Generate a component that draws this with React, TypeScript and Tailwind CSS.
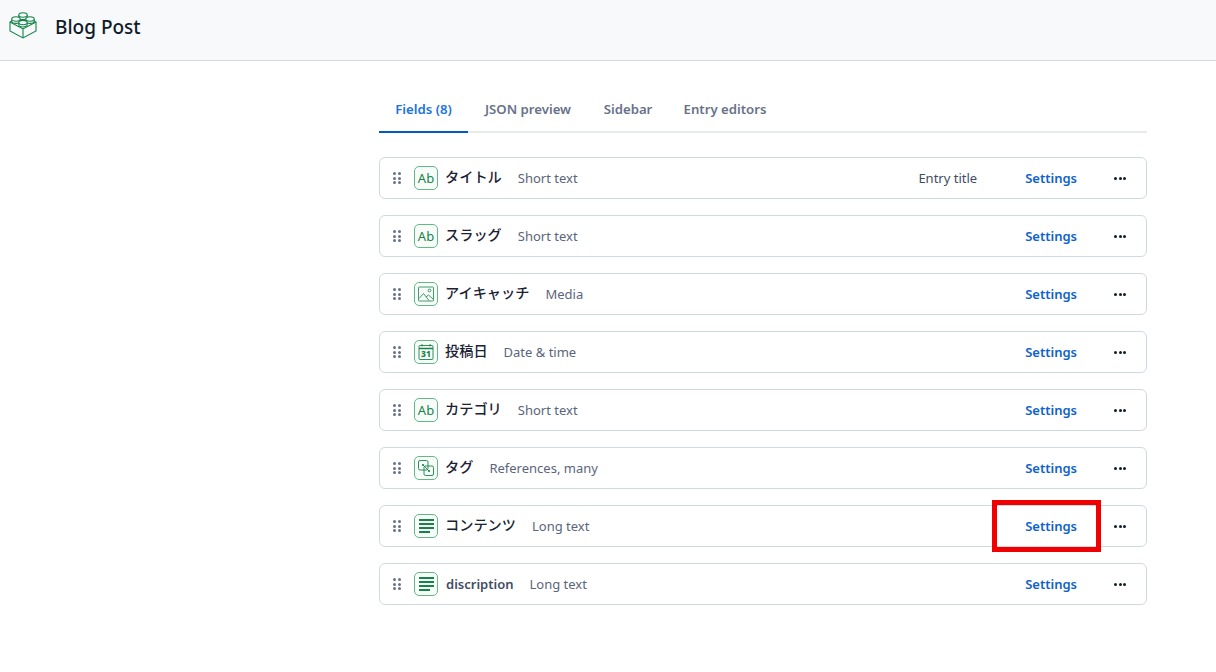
import React from "react";

const font = "font-['Noto_Sans','Noto_Sans_CJK_JP',sans-serif]";

function IconBox({ children }: { children: React.ReactNode }) {
  return (
    <span className="w-6 h-6 rounded-[5px] border border-[#64b888] flex items-center justify-center text-[#17834a] bg-[#f7fcf9] shrink-0">
      {children}
    </span>
  );
}

const AbIcon = () => <span className="text-[13px] leading-none tracking-[0.2px]">Ab</span>;

const MediaIcon = () => (
  <svg width="18" height="18" viewBox="0 0 18 18" fill="none" stroke="currentColor" strokeWidth="0.8">
    <rect x="1.5" y="2" width="15" height="14" rx="0.8" />
    <path d="M2 13.5 L6.5 8.5 L12 15.5" />
    <path d="M9 12 L11.5 10 L16 14" />
    <circle cx="12.5" cy="5.5" r="1.4" />
  </svg>
);

const DateIcon = () => (
  <svg width="18" height="18" viewBox="0 0 18 18" fill="none" stroke="currentColor" strokeWidth="0.9">
    <rect x="2" y="2.5" width="14" height="14" rx="1" />
    <path d="M2 5.5 H16" strokeWidth="1.5" />
    <path d="M5 1 V3.5 M13 1 V3.5" />
    <text x="9" y="14.2" textAnchor="middle" fontSize="8.5" fontWeight="800" fill="currentColor" stroke="none" fontFamily="Noto Sans">31</text>
  </svg>
);

const RefIcon = () => (
  <svg width="18" height="18" viewBox="0 0 18 18" fill="none" stroke="currentColor" strokeWidth="0.9">
    <rect x="1.5" y="1.5" width="9.5" height="9.5" rx="1.5" />
    <rect x="7" y="7" width="9.5" height="9.5" rx="1.5" />
    <circle cx="6" cy="6" r="1.1" fill="currentColor" stroke="none" />
    <circle cx="12" cy="12" r="1.1" fill="currentColor" stroke="none" />
    <path d="M6 6 L12 12" />
  </svg>
);

const TextIcon = () => (
  <span className="flex flex-col gap-[2.4px] w-[15px]">
    <span className="h-[1.5px] bg-[#17834a]" />
    <span className="h-[1.5px] bg-[#17834a]" />
    <span className="h-[1.5px] bg-[#17834a]" />
    <span className="h-[1.5px] w-[11px] bg-[#17834a]" />
  </span>
);

const LegoIcon = () => (
  <svg className="mb-[3px]" width="28" height="27" viewBox="0 0 28 27" fill="none" stroke="#17834a" strokeWidth="1.1">
    <path d="M1 10 L8 6 H20 L27 10 V19 L14 26 L1 19 Z" />
    <path d="M1 10 L14 17 L27 10 M14 17 V26" />
    <path d="M9.8 3 V5.4 A4.2 2.2 0 0 0 18.2 5.4 V3" fill="#f7f9fa" />
    <ellipse cx="14" cy="3" rx="4.2" ry="2.2" fill="#f7f9fa" />
    <path d="M2.8 7 V9.2 A4.2 2.2 0 0 0 11.2 9.2 V7" fill="#f7f9fa" />
    <ellipse cx="7" cy="7" rx="4.2" ry="2.2" fill="#f7f9fa" />
    <path d="M16.8 7 V9.2 A4.2 2.2 0 0 0 25.2 9.2 V7" fill="#f7f9fa" />
    <ellipse cx="21" cy="7" rx="4.2" ry="2.2" fill="#f7f9fa" />
    <path d="M9.8 10.6 V12.8 A4.2 2.2 0 0 0 18.2 12.8 V10.6" fill="#f7f9fa" />
    <ellipse cx="14" cy="10.6" rx="4.2" ry="2.2" fill="#f7f9fa" />
  </svg>
);

const DragHandle = () => (
  <span className="grid grid-cols-2 gap-x-[2px] gap-y-[1.5px] w-2 shrink-0">
    {[0, 1, 2, 3, 4, 5].map((i) => (
      <span key={i} className="w-[3px] h-[3px] rounded-full bg-[#67728a]" />
    ))}
  </span>
);

const fields = [
  { name: "タイトル", type: "Short text", icon: <AbIcon />, extra: "Entry title" },
  { name: "スラッグ", type: "Short text", icon: <AbIcon /> },
  { name: "アイキャッチ", type: "Media", icon: <MediaIcon /> },
  { name: "投稿日", type: "Date & time", icon: <DateIcon /> },
  { name: "カテゴリ", type: "Short text", icon: <AbIcon /> },
  { name: "タグ", type: "References, many", icon: <RefIcon /> },
  { name: "コンテンツ", type: "Long text", icon: <TextIcon />, marked: true },
  { name: "discription", type: "Long text", icon: <TextIcon />, latin: true },
];

const tabs = [
  { label: "Fields (8)", width: "w-[89px]" },
  { label: "JSON preview", width: "w-[120px]" },
  { label: "Sidebar", width: "w-[80px]" },
  { label: "Entry editors", width: "w-[114px]" },
];

export default function App() {
  return (
    <div className={`${font} min-h-[672px] bg-white text-[#1a2233]`}>
      <header className="h-[61px] bg-[#f7f9fa] border-b border-[#cfd9e0] flex items-center pl-[9px] pb-[6px]">
        <LegoIcon />
        <h1 className="ml-[18px] text-[19px] font-medium text-[#111b2b] leading-none">Blog Post</h1>
      </header>

      <main className="w-[768px] ml-[379px] pt-[26px]">
        <nav className="flex border-b-2 border-[#e7ebee] h-[46px]">
          {tabs.map((t, i) => (
            <button
              key={t.label}
              className={
                i === 0
                  ? `${t.width} h-[46px] pt-[2px] text-[13.2px] font-semibold text-[#1a73e0] border-b-2 border-[#0059c8] -mb-[2px] whitespace-nowrap`
                  : `${t.width} h-[46px] pt-[2px] text-[13.2px] font-semibold text-[#67728a] border-b-2 border-transparent whitespace-nowrap`
              }
            >
              {t.label}
            </button>
          ))}
        </nav>

        <ul className="mt-6 flex flex-col gap-4">
          {fields.map((f) => (
            <li
              key={f.name}
              className="relative h-[42px] border border-[#cfd9e0] rounded-md flex items-center pl-[13px] bg-white"
            >
              <DragHandle />
              <span className="ml-[13px]">
                <IconBox>{f.icon}</IconBox>
              </span>
              <span
                className={
                  f.latin
                    ? "ml-2 pt-[2px] text-[13px] font-semibold text-[#414d63] whitespace-nowrap"
                    : "ml-[7px] pb-[2px] text-[14.2px] font-medium text-[#1a2233] whitespace-nowrap"
                }
              >
                {f.name}
              </span>
              <span
                className={
                  f.latin
                    ? "ml-4 pt-[2px] text-[13px] text-[#5a657c] whitespace-nowrap"
                    : "ml-4 pt-[2px] text-[13px] text-[#5a657c] whitespace-nowrap"
                }
              >
                {f.type}
              </span>
              {f.extra && <span className="ml-auto mr-[48px] pt-[2px] text-[13px] text-[#414d63]">{f.extra}</span>}
              <span className={`${f.extra ? "" : "ml-auto"} pt-[2px] text-[13px] font-semibold text-[#0e62cc]`}>Settings</span>
              <span className="ml-[37px] mr-[20px] flex gap-[1.5px] w-[12px]">
                <span className="w-[3px] h-[3px] rounded-full bg-[#111b2b]" />
                <span className="w-[3px] h-[3px] rounded-full bg-[#111b2b]" />
                <span className="w-[3px] h-[3px] rounded-full bg-[#111b2b]" />
              </span>
              {f.marked && (
                <span className="absolute right-[45px] -top-[6px] w-[109px] h-[52px] border-[5px] border-[#f00000]" />
              )}
            </li>
          ))}
        </ul>
      </main>
    </div>
  );
}
